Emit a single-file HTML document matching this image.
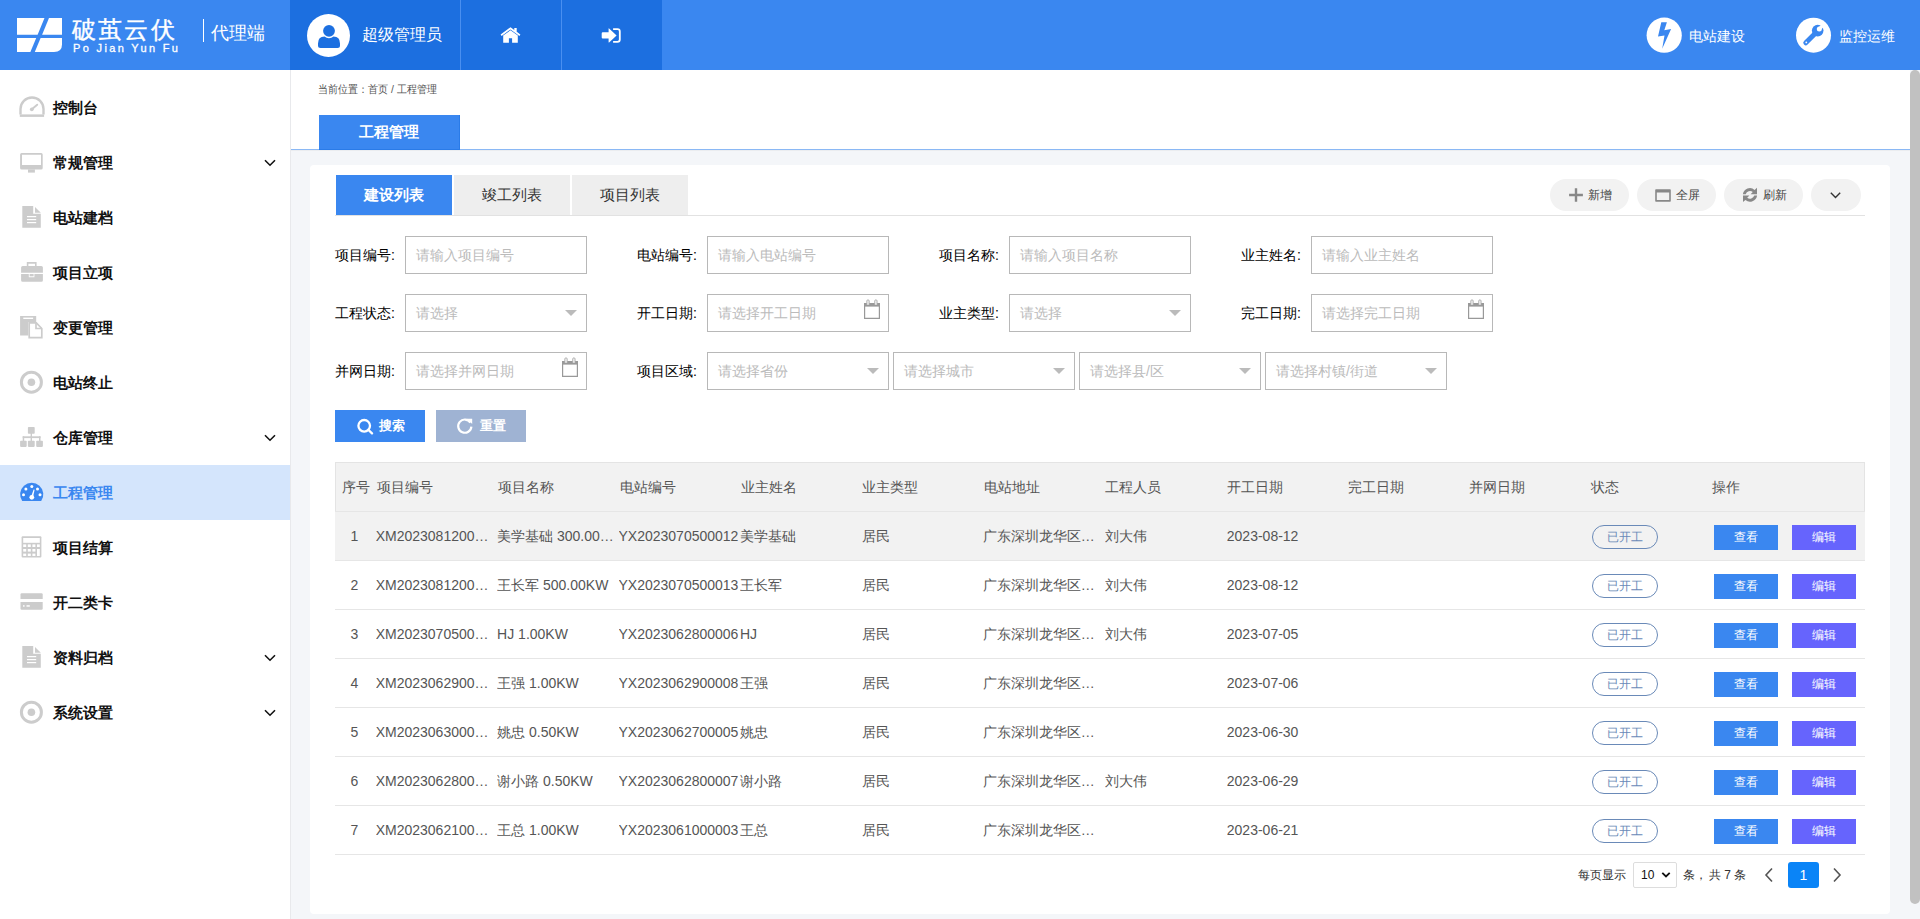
<!DOCTYPE html>
<html><head><meta charset="utf-8">
<style>
*{box-sizing:border-box;margin:0;padding:0}
html,body{width:1920px;height:919px;overflow:hidden;background:#fff;font-family:"Liberation Sans",sans-serif;color:#333}
.abs{position:absolute}
#hdr{position:absolute;left:0;top:0;width:1920px;height:70px;background:#3a87f0}
#hblk{position:absolute;left:290px;top:0;width:372px;height:70px;background:#1c6fe0}
.hdiv{position:absolute;top:0;width:1px;height:70px;background:#4a8ff0}
#side{position:absolute;left:0;top:70px;width:290px;height:849px;background:#fff}
#sline{position:absolute;left:290px;top:70px;width:1px;height:849px;background:#e8e9ec}
.mi{position:absolute;left:0;width:290px;height:55px;font-size:15px;font-weight:bold;color:#111}
.mi .t{position:absolute;left:53px;top:0;line-height:55px}
.mi.act{background:#d4e5fc;color:#3a87f0}
.mi svg{position:absolute}
.chev{position:absolute;left:263px;top:23px}
#main{position:absolute;left:290px;top:70px;width:1630px;height:849px;background:#f4f6f9}
#card{position:absolute;left:310px;top:165px;width:1580px;height:749px;background:#fff;border-radius:4px}
#scroll{position:absolute;left:1910px;top:70px;width:10px;height:834px;background:#c1c1c1;border-radius:5px}
.bc{font-size:10.4px;line-height:14px;color:#555;white-space:nowrap}
.tab{width:116px;height:41px;background:#eeeeee;color:#333;font-size:15px;line-height:39px;text-align:center}
.tab.act{background:#3a87f0;color:#fff;font-weight:bold}
.pill{height:32px;background:#f2f2f2;border-radius:16px}
.ptx{font-size:12px;line-height:18px;color:#444;white-space:nowrap}
.lab{font-size:14px;line-height:38px;color:#000;white-space:nowrap}
.inp{width:182px;height:38px;border:1px solid #b8b8b8;padding-left:10px;font-size:14px;line-height:36px;color:#bbb;white-space:nowrap;background:#fff}
.btn{width:90px;height:32px}
.btn span{position:absolute;top:0;line-height:31px;color:#fff;font-size:13px;font-weight:bold}
.th{font-size:14px;line-height:49px;color:#555;white-space:nowrap}
.td{font-size:14px;line-height:49px;color:#555;white-space:nowrap;overflow:hidden;text-overflow:ellipsis}
.badge{width:66px;height:24px;border:1px solid #6a8ab8;border-radius:12px;color:#6a8ab8;font-size:12px;line-height:22px;text-align:center}
.obtn{width:64px;height:25px;color:#fff;font-size:12px;line-height:25px;text-align:center}
.pg{font-size:12px;line-height:16px;color:#333;white-space:nowrap}
</style></head><body>
<div id="hdr">
  <svg class="abs" style="left:17px;top:18px" width="45" height="34" viewBox="0 0 45 34"><g fill="#fff">
   <path d="M0 0H27.5L20.6 16.7H0Z"/><path d="M32 0H45V16.7H25.1Z"/>
   <path d="M0 20H19.2L13.4 34H0Z"/><path d="M23.6 20H45V26.5Q45 34 37 34H17.8Z"/></g></svg>
  <div class="abs" style="left:72px;top:15px;font-size:24px;line-height:30px;color:#fff;letter-spacing:2.2px;-webkit-text-stroke:0.4px #fff;white-space:nowrap">破茧云伏</div>
  <div class="abs" style="left:73px;top:42px;font-size:11px;line-height:13px;color:#fff;letter-spacing:2.35px;-webkit-text-stroke:0.3px #fff;white-space:nowrap">Po Jian Yun Fu</div>
  <div class="abs" style="left:203px;top:19px;width:1px;height:23px;background:#fff"></div>
  <div class="abs" style="left:211px;top:22px;font-size:17.5px;line-height:22px;color:#fff;white-space:nowrap">代理端</div>
  <div id="hblk"></div>
  <div class="hdiv" style="left:460px"></div>
  <div class="hdiv" style="left:561px"></div>
  <svg class="abs" style="left:307px;top:14px" width="43" height="43" viewBox="0 0 43 43">
   <circle cx="21.5" cy="21.5" r="21.5" fill="#fff"/>
   <circle cx="22" cy="16.8" r="5.9" fill="#1c6fe0"/>
   <path d="M11 29.5Q11 22.5 17.5 22.5Q19.5 24.2 22 24.2Q24.5 24.2 26.5 22.5Q33 22.5 33 29.5V31.5Q33 34 30.5 34H13.5Q11 34 11 31.5Z" fill="#1c6fe0"/>
  </svg>
  <div class="abs" style="left:362px;top:25px;font-size:16px;line-height:20px;color:#fff;white-space:nowrap">超级管理员</div>
  <svg class="abs" style="left:500px;top:27px" width="21" height="16" viewBox="0 0 21 16">
   <path d="M0.6 7.6L10.5 0.2L14.3 3V1H16.7V4.8L20.4 7.6L19.4 8.9L10.5 2.4L1.6 8.9Z" fill="#fff"/>
   <path d="M3.2 8.6L10.5 3.3L17.8 8.6V15.7H12.1V11.2H8.9V15.7H3.2Z" fill="#fff"/>
  </svg>
  <svg class="abs" style="left:601px;top:28px" width="21" height="15" viewBox="0 0 21 15">
   <path d="M1.8 4.3H7.6V0.5Q7.6 0 8.1 0.4L15.6 7.4L8.1 14.4Q7.6 14.8 7.6 14.3V10.5H1.8Q0.7 10.5 0.7 9.4V5.4Q0.7 4.3 1.8 4.3Z" fill="#fff"/>
   <path d="M12.1 0.3H16.5Q19.7 0.3 19.7 3.5V11.5Q19.7 14.7 16.5 14.7H12.1V12.9H16.5Q17.9 12.9 17.9 11.5V3.5Q17.9 2.1 16.5 2.1H12.1Z" fill="#fff"/>
  </svg>
  <svg class="abs" style="left:1646px;top:17px" width="36" height="36" viewBox="0 0 36 36">
   <circle cx="18.2" cy="18.2" r="17.6" fill="#fff"/>
   <path d="M15.3 5.2H20.9L18.3 13.3L25.1 12L16.2 31.8L18.5 18.5L12 19.5Z" fill="#3a87f0"/>
  </svg>
  <div class="abs" style="left:1689px;top:27px;font-size:14px;line-height:18px;color:#fff;white-space:nowrap">电站建设</div>
  <svg class="abs" style="left:1796px;top:17px" width="36" height="36" viewBox="0 0 36 36">
   <circle cx="17.5" cy="18.2" r="17.5" fill="#fff"/>
   <circle cx="21.7" cy="13.6" r="5.8" fill="#3a87f0"/>
   <path d="M19.6 16L9.8 25.8" stroke="#3a87f0" stroke-width="5" stroke-linecap="round"/>
   <circle cx="23.3" cy="12" r="2.5" fill="#fff"/>
   <path d="M23.3 12L27.5 7.8" stroke="#fff" stroke-width="3.2"/>
   <circle cx="10.3" cy="25.4" r="0.9" fill="#fff"/>
  </svg>
  <div class="abs" style="left:1839px;top:27px;font-size:14px;line-height:18px;color:#fff;white-space:nowrap">监控运维</div>
</div>
<div id="side">
<div class="mi" style="top:10px"><span class="t">控制台</span></div>
<div class="mi" style="top:65px"><span class="t">常规管理</span></div>
<div class="mi" style="top:120px"><span class="t">电站建档</span></div>
<div class="mi" style="top:175px"><span class="t">项目立项</span></div>
<div class="mi" style="top:230px"><span class="t">变更管理</span></div>
<div class="mi" style="top:285px"><span class="t">电站终止</span></div>
<div class="mi" style="top:340px"><span class="t">仓库管理</span></div>
<div class="mi act" style="top:395px"><span class="t">工程管理</span></div>
<div class="mi" style="top:450px"><span class="t">项目结算</span></div>
<div class="mi" style="top:505px"><span class="t">开二类卡</span></div>
<div class="mi" style="top:560px"><span class="t">资料归档</span></div>
<div class="mi" style="top:615px"><span class="t">系统设置</span></div>
<svg class="abs" style="left:14px;top:20px" width="36" height="34" viewBox="0 0 36 34"><path d="M6.5 24.6V19A11.5 11.5 0 0 1 29.5 19V24.6" fill="none" stroke="#cccccc" stroke-width="2.4"/><rect x="5.8" y="24.4" width="24.3" height="2.5" fill="#cccccc"/><path d="M17.8 19.3L23.2 14.7" stroke="#cccccc" stroke-width="1.9" stroke-linecap="round"/><circle cx="17.8" cy="19.3" r="1.9" fill="#cccccc"/></svg>
<svg class="abs" style="left:14px;top:75px" width="36" height="34" viewBox="0 0 36 34"><path d="M7.6 8H27.2Q28.7 8 28.7 9.5V23.1Q28.7 24.6 27.2 24.6H7.6Q6.1 24.6 6.1 23.1V9.5Q6.1 8 7.6 8ZM8 9.8V20H27V9.8Z" fill="#cccccc" fill-rule="evenodd"/><rect x="14" y="24.4" width="6.9" height="3.2" fill="#cccccc"/></svg>
<svg class="abs" style="left:263px;top:88px" width="14" height="10" viewBox="0 0 14 10"><path d="M2 2.2L7 7.2L12 2.2" fill="none" stroke="#111" stroke-width="1.6"/></svg>
<svg class="abs" style="left:14px;top:130px" width="36" height="34" viewBox="0 0 36 34"><path d="M8.3 6.1H19.2V13.7H26.8V27.8H8.3Z" fill="#cccccc"/><path d="M21 7L26.8 12.8H21Z" fill="#cccccc"/><rect x="13" y="16" width="9.2" height="1.2" fill="#fff"/><rect x="13" y="19" width="9.2" height="1.2" fill="#fff"/><rect x="13" y="22" width="9.2" height="1.2" fill="#fff"/></svg>
<svg class="abs" style="left:14px;top:185px" width="36" height="34" viewBox="0 0 36 34"><path d="M12.8 11V7H22.6V11H21V8.8H14.4V11Z" fill="#cccccc"/><path d="M7.1 12.4Q7.1 10.9 8.6 10.9H27.4Q28.9 10.9 28.9 12.4V17.8H7.1Z" fill="#cccccc"/><path d="M7.1 19H14.8V22.2H20.4V19H28.9V25.2Q28.9 26.7 27.4 26.7H8.6Q7.1 26.7 7.1 25.2Z" fill="#cccccc"/><rect x="15.6" y="19" width="4" height="2.3" fill="#cccccc"/></svg>
<svg class="abs" style="left:14px;top:240px" width="36" height="34" viewBox="0 0 36 34"><path d="M6.1 5.9H22.2V11.9H14.3V25.6H6.1Z" fill="#cccccc"/><rect x="9.3" y="7.6" width="9.8" height="1.4" fill="#fff"/><path d="M15.2 12.8H22.3L27.8 18.5V27.6H15.2Z" fill="none" stroke="#cccccc" stroke-width="1.7"/><path d="M22 12.3V18.5H28" fill="none" stroke="#cccccc" stroke-width="1.7"/></svg>
<svg class="abs" style="left:14px;top:295px" width="36" height="34" viewBox="0 0 36 34"><circle cx="17.4" cy="17.2" r="10" fill="none" stroke="#cccccc" stroke-width="3"/><circle cx="17.4" cy="17.2" r="3.8" fill="#cccccc"/></svg>
<svg class="abs" style="left:14px;top:350px" width="36" height="34" viewBox="0 0 36 34"><rect x="13.9" y="7" width="6.8" height="6.7" rx="0.8" fill="#cccccc"/><rect x="16.6" y="13" width="1.4" height="4" fill="#cccccc"/><rect x="8.7" y="16.3" width="17.8" height="1.8" fill="#cccccc"/><rect x="8.7" y="16.3" width="1.5" height="5" fill="#cccccc"/><rect x="25" y="16.3" width="1.5" height="5" fill="#cccccc"/><rect x="16.6" y="16.3" width="1.4" height="5" fill="#cccccc"/><rect x="6.1" y="20.7" width="6.6" height="6.2" rx="0.8" fill="#cccccc"/><rect x="13.9" y="20.7" width="6.8" height="6.2" rx="0.8" fill="#cccccc"/><rect x="22.2" y="20.7" width="6.7" height="6.2" rx="0.8" fill="#cccccc"/></svg>
<svg class="abs" style="left:263px;top:363px" width="14" height="10" viewBox="0 0 14 10"><path d="M2 2.2L7 7.2L12 2.2" fill="none" stroke="#111" stroke-width="1.6"/></svg>
<svg class="abs" style="left:14px;top:405px" width="36" height="34" viewBox="0 0 36 34"><path d="M8.2 26.1A11.6 11.6 0 1 1 27.2 26.1Z" fill="#3a87f0"/><g fill="#fff"><circle cx="17.8" cy="11.5" r="1.5"/><circle cx="11.9" cy="14" r="1.5"/><circle cx="23.5" cy="14" r="1.5"/><circle cx="9.5" cy="19.7" r="1.5"/><circle cx="26" cy="19.7" r="1.5"/><circle cx="17.8" cy="22.3" r="2.4"/><path d="M17 22L19.6 14.5L20.6 14.8L18.9 22.5Z"/></g></svg>
<svg class="abs" style="left:14px;top:460px" width="36" height="34" viewBox="0 0 36 34"><path d="M8.6 6.3H26.4Q27.4 6.3 27.4 7.3V26.6Q27.4 27.6 26.4 27.6H8.6Q7.6 27.6 7.6 26.6V7.3Q7.6 6.3 8.6 6.3Z" fill="#cccccc"/><g fill="#fff"><rect x="9.2" y="8" width="16.6" height="4.8"/><rect x="9.2" y="14.4" width="3" height="2.6"/><rect x="13.8" y="14.4" width="3" height="2.6"/><rect x="18.4" y="14.4" width="3" height="2.6"/><rect x="23" y="14.4" width="2.8" height="2.6"/><rect x="9.2" y="19" width="3" height="2.6"/><rect x="13.8" y="19" width="3" height="2.6"/><rect x="18.4" y="19" width="3" height="2.6"/><rect x="23" y="19" width="2.8" height="7"/><rect x="9.2" y="23.6" width="3" height="2.4"/><rect x="13.8" y="23.6" width="3" height="2.4"/><rect x="18.4" y="23.6" width="3" height="2.4"/></g></svg>
<svg class="abs" style="left:14px;top:515px" width="36" height="34" viewBox="0 0 36 34"><path d="M7.7 8.3H27.5Q28.7 8.3 28.7 9.5V13.9H6.5V9.5Q6.5 8.3 7.7 8.3Z" fill="#cccccc"/><path d="M6.5 16.9H28.7V23.6Q28.7 24.8 27.5 24.8H7.7Q6.5 24.8 6.5 23.6Z" fill="#cccccc"/><rect x="9" y="20.2" width="1.6" height="1.5" fill="#fff"/><rect x="12.5" y="20.2" width="3.3" height="1.5" fill="#fff"/></svg>
<svg class="abs" style="left:14px;top:570px" width="36" height="34" viewBox="0 0 36 34"><path d="M8.3 6.1H19.2V13.7H26.8V27.8H8.3Z" fill="#cccccc"/><path d="M21 7L26.8 12.8H21Z" fill="#cccccc"/><rect x="13" y="16" width="9.2" height="1.2" fill="#fff"/><rect x="13" y="19" width="9.2" height="1.2" fill="#fff"/><rect x="13" y="22" width="9.2" height="1.2" fill="#fff"/></svg>
<svg class="abs" style="left:263px;top:583px" width="14" height="10" viewBox="0 0 14 10"><path d="M2 2.2L7 7.2L12 2.2" fill="none" stroke="#111" stroke-width="1.6"/></svg>
<svg class="abs" style="left:14px;top:625px" width="36" height="34" viewBox="0 0 36 34"><circle cx="17.4" cy="17.2" r="10" fill="none" stroke="#cccccc" stroke-width="3"/><circle cx="17.4" cy="17.2" r="3.8" fill="#cccccc"/></svg>
<svg class="abs" style="left:263px;top:638px" width="14" height="10" viewBox="0 0 14 10"><path d="M2 2.2L7 7.2L12 2.2" fill="none" stroke="#111" stroke-width="1.6"/></svg>
</div>
<div id="main"></div>
<div id="sline"></div>
<div class="abs" style="left:291px;top:70px;width:1619px;height:80px;background:#fff"></div>
<div class="abs" style="left:291px;top:149px;width:1619px;height:1px;background:#8ab8f5"></div>
<div class="abs" style="left:291px;top:150px;width:1619px;height:1px;background:#ebedf0"></div>
<div class="abs bc" style="left:318px;top:83px;transform:scaleY(1.1);transform-origin:0 50%">当前位置：首页 / 工程管理</div>
<div class="abs" style="left:319px;top:115px;width:141px;height:35px;background:#3a87f0;border-right:1px solid #2a7be8;border-bottom:1px solid #2a7be8;color:#fff;font-size:15px;font-weight:bold;text-align:center;line-height:34px">工程管理</div>
<div id="card"></div>
<div id="scroll"></div>
<!-- CARD CONTENT -->
<div class="abs tab act" style="left:336px;top:175px">建设列表</div>
<div class="abs tab" style="left:454px;top:175px">竣工列表</div>
<div class="abs tab" style="left:572px;top:175px">项目列表</div>
<div class="abs" style="left:335px;top:215px;width:1530px;height:1px;background:#e2e2e2"></div>
<div class="abs pill" style="left:1550px;top:179px;width:79px"></div>
<svg class="abs" style="left:1569px;top:188px" width="14" height="14" viewBox="0 0 14 14"><path d="M5.8 0.3H8.2V5.8H13.9V8.2H8.2V13.7H5.8V8.2H0.1V5.8H5.8Z" fill="#888"/></svg>
<div class="abs ptx" style="left:1588px;top:186px">新增</div>
<div class="abs pill" style="left:1637px;top:179px;width:79px"></div>
<svg class="abs" style="left:1655px;top:189px" width="16" height="13" viewBox="0 0 16 13"><path d="M1 0.3H15Q15.8 0.3 15.8 1.1V11.9Q15.8 12.7 15 12.7H1Q0.2 12.7 0.2 11.9V1.1Q0.2 0.3 1 0.3ZM1.8 3.6V11.1H14.2V3.6Z" fill="#888" fill-rule="evenodd"/></svg>
<div class="abs ptx" style="left:1676px;top:186px">全屏</div>
<div class="abs pill" style="left:1724px;top:179px;width:79px"></div>
<svg class="abs" style="left:1742px;top:187px" width="16" height="16" viewBox="0 0 16 16"><path d="M0.9 7.2A7.1 7.1 0 0 1 12.6 2.9L15 0.7V7.2H8.6L10.8 5.1A4.5 4.5 0 0 0 3.7 7.2Z" fill="#888"/><path d="M15.1 8.6A7.1 7.1 0 0 1 3.4 12.9L1 15.1V8.6H7.4L5.2 10.7A4.5 4.5 0 0 0 12.3 8.6Z" fill="#888"/></svg>
<div class="abs ptx" style="left:1763px;top:186px">刷新</div>
<div class="abs pill" style="left:1811px;top:179px;width:50px"></div>
<svg class="abs" style="left:1829px;top:190px" width="13" height="10" viewBox="0 0 13 10"><path d="M1.8 2.8L6.5 7.5L11.2 2.8" fill="none" stroke="#333" stroke-width="1.4"/></svg>
<div class="abs lab" style="left:335px;top:236px">项目编号:</div>
<div class="abs inp" style="left:405px;top:236px">请输入项目编号</div>
<div class="abs lab" style="left:637px;top:236px">电站编号:</div>
<div class="abs inp" style="left:707px;top:236px">请输入电站编号</div>
<div class="abs lab" style="left:939px;top:236px">项目名称:</div>
<div class="abs inp" style="left:1009px;top:236px">请输入项目名称</div>
<div class="abs lab" style="left:1241px;top:236px">业主姓名:</div>
<div class="abs inp" style="left:1311px;top:236px">请输入业主姓名</div>
<div class="abs lab" style="left:335px;top:294px">工程状态:</div>
<div class="abs inp" style="left:405px;top:294px">请选择</div>
<svg class="abs" style="left:565px;top:310px" width="12" height="6" viewBox="0 0 12 6"><path d="M0 0H12L6 6Z" fill="#bbb"/></svg>
<div class="abs lab" style="left:637px;top:294px">开工日期:</div>
<div class="abs inp" style="left:707px;top:294px">请选择开工日期</div>
<svg class="abs" style="left:864px;top:299px" width="17" height="21" viewBox="0 0 17 21"><path d="M0.6 4.6H15.4V19.4H0.6Z" fill="none" stroke="#999" stroke-width="1.2"/><rect x="0.6" y="4" width="14.8" height="3.6" fill="#999"/><path d="M2.9 5.8V1.8Q2.9 0.9 4 0.9Q5.1 0.9 5.1 1.8V5.8" fill="#fff" stroke="#aaa" stroke-width="1"/><path d="M10.8 5.8V1.8Q10.8 0.9 11.9 0.9Q13 0.9 13 1.8V5.8" fill="#fff" stroke="#aaa" stroke-width="1"/></svg>
<div class="abs lab" style="left:939px;top:294px">业主类型:</div>
<div class="abs inp" style="left:1009px;top:294px">请选择</div>
<svg class="abs" style="left:1169px;top:310px" width="12" height="6" viewBox="0 0 12 6"><path d="M0 0H12L6 6Z" fill="#bbb"/></svg>
<div class="abs lab" style="left:1241px;top:294px">完工日期:</div>
<div class="abs inp" style="left:1311px;top:294px">请选择完工日期</div>
<svg class="abs" style="left:1468px;top:299px" width="17" height="21" viewBox="0 0 17 21"><path d="M0.6 4.6H15.4V19.4H0.6Z" fill="none" stroke="#999" stroke-width="1.2"/><rect x="0.6" y="4" width="14.8" height="3.6" fill="#999"/><path d="M2.9 5.8V1.8Q2.9 0.9 4 0.9Q5.1 0.9 5.1 1.8V5.8" fill="#fff" stroke="#aaa" stroke-width="1"/><path d="M10.8 5.8V1.8Q10.8 0.9 11.9 0.9Q13 0.9 13 1.8V5.8" fill="#fff" stroke="#aaa" stroke-width="1"/></svg>
<div class="abs lab" style="left:335px;top:352px">并网日期:</div>
<div class="abs inp" style="left:405px;top:352px">请选择并网日期</div>
<svg class="abs" style="left:562px;top:357px" width="17" height="21" viewBox="0 0 17 21"><path d="M0.6 4.6H15.4V19.4H0.6Z" fill="none" stroke="#999" stroke-width="1.2"/><rect x="0.6" y="4" width="14.8" height="3.6" fill="#999"/><path d="M2.9 5.8V1.8Q2.9 0.9 4 0.9Q5.1 0.9 5.1 1.8V5.8" fill="#fff" stroke="#aaa" stroke-width="1"/><path d="M10.8 5.8V1.8Q10.8 0.9 11.9 0.9Q13 0.9 13 1.8V5.8" fill="#fff" stroke="#aaa" stroke-width="1"/></svg>
<div class="abs lab" style="left:637px;top:352px">项目区域:</div>
<div class="abs inp" style="left:707px;top:352px">请选择省份</div>
<svg class="abs" style="left:867px;top:368px" width="12" height="6" viewBox="0 0 12 6"><path d="M0 0H12L6 6Z" fill="#bbb"/></svg>
<div class="abs inp" style="left:893px;top:352px">请选择城市</div>
<svg class="abs" style="left:1053px;top:368px" width="12" height="6" viewBox="0 0 12 6"><path d="M0 0H12L6 6Z" fill="#bbb"/></svg>
<div class="abs inp" style="left:1079px;top:352px">请选择县/区</div>
<svg class="abs" style="left:1239px;top:368px" width="12" height="6" viewBox="0 0 12 6"><path d="M0 0H12L6 6Z" fill="#bbb"/></svg>
<div class="abs inp" style="left:1265px;top:352px">请选择村镇/街道</div>
<svg class="abs" style="left:1425px;top:368px" width="12" height="6" viewBox="0 0 12 6"><path d="M0 0H12L6 6Z" fill="#bbb"/></svg>
<div class="abs btn" style="left:335px;top:410px;background:#3a87f0"><span style="left:44px">搜索</span></div>
<svg class="abs" style="left:356px;top:417px" width="18" height="18" viewBox="0 0 18 18"><circle cx="8.2" cy="8.8" r="5.8" fill="none" stroke="#fff" stroke-width="2.3"/><path d="M12.3 12.8L16 16.4" stroke="#fff" stroke-width="2.3" stroke-linecap="round"/></svg>
<div class="abs btn" style="left:436px;top:410px;background:#9fb3d3"><span style="left:44px">重置</span></div>
<svg class="abs" style="left:456px;top:417px" width="18" height="18" viewBox="0 0 18 18"><path d="M14.4 5.6A6.6 6.6 0 1 0 15.4 9.6" fill="none" stroke="#fff" stroke-width="2.2"/><path d="M11 1.8H16.2V7Z" fill="#fff"/></svg>
<div class="abs" style="left:335px;top:462px;width:1530px;height:49px;background:#f2f2f2;border:1px solid #e4e4e4;border-bottom:0"></div>
<div class="abs" style="left:335px;top:512px;width:1530px;height:48px;background:#f2f2f2"></div>
<div class="abs" style="left:335px;top:511px;width:1530px;height:1px;background:#e6e6e6"></div>
<div class="abs" style="left:335px;top:560px;width:1530px;height:1px;background:#e6e6e6"></div>
<div class="abs" style="left:335px;top:609px;width:1530px;height:1px;background:#e6e6e6"></div>
<div class="abs" style="left:335px;top:658px;width:1530px;height:1px;background:#e6e6e6"></div>
<div class="abs" style="left:335px;top:707px;width:1530px;height:1px;background:#e6e6e6"></div>
<div class="abs" style="left:335px;top:756px;width:1530px;height:1px;background:#e6e6e6"></div>
<div class="abs" style="left:335px;top:805px;width:1530px;height:1px;background:#e6e6e6"></div>
<div class="abs" style="left:335px;top:854px;width:1530px;height:1px;background:#e6e6e6"></div>
<div class="abs th" style="left:342.0px;top:463px">序号</div>
<div class="abs th" style="left:376.7px;top:463px">项目编号</div>
<div class="abs th" style="left:498.1px;top:463px">项目名称</div>
<div class="abs th" style="left:619.5px;top:463px">电站编号</div>
<div class="abs th" style="left:740.9px;top:463px">业主姓名</div>
<div class="abs th" style="left:862.3px;top:463px">业主类型</div>
<div class="abs th" style="left:983.7px;top:463px">电站地址</div>
<div class="abs th" style="left:1105.1px;top:463px">工程人员</div>
<div class="abs th" style="left:1226.5px;top:463px">开工日期</div>
<div class="abs th" style="left:1347.9px;top:463px">完工日期</div>
<div class="abs th" style="left:1469.3px;top:463px">并网日期</div>
<div class="abs th" style="left:1590.7px;top:463px">状态</div>
<div class="abs th" style="left:1712.1px;top:463px">操作</div>
<div class="abs td" style="left:336px;top:512px;width:37px;text-align:center">1</div>
<div class="abs td" style="left:375.7px;top:512px;width:120.3px">XM2023081200001</div>
<div class="abs td" style="left:497.1px;top:512px;width:120.3px">美学基础 300.00KW</div>
<div class="abs td" style="left:618.5px;top:512px;width:120.3px">YX2023070500012</div>
<div class="abs td" style="left:739.9px;top:512px;width:120.3px">美学基础</div>
<div class="abs td" style="left:862.1px;top:512px;width:120.3px">居民</div>
<div class="abs td" style="left:982.7px;top:512px;width:120.3px">广东深圳龙华区民治街道</div>
<div class="abs td" style="left:1104.6px;top:512px;width:120.3px">刘大伟</div>
<div class="abs td" style="left:1226.8px;top:512px;width:120.3px">2023-08-12</div>
<div class="abs badge" style="left:1592px;top:525px">已开工</div>
<div class="abs obtn" style="left:1714px;top:525px;background:#3a87f0">查看</div>
<div class="abs obtn" style="left:1792px;top:525px;background:#6664fd">编辑</div>
<div class="abs td" style="left:336px;top:561px;width:37px;text-align:center">2</div>
<div class="abs td" style="left:375.7px;top:561px;width:120.3px">XM2023081200002</div>
<div class="abs td" style="left:497.1px;top:561px;width:120.3px">王长军 500.00KW</div>
<div class="abs td" style="left:618.5px;top:561px;width:120.3px">YX2023070500013</div>
<div class="abs td" style="left:739.9px;top:561px;width:120.3px">王长军</div>
<div class="abs td" style="left:862.1px;top:561px;width:120.3px">居民</div>
<div class="abs td" style="left:982.7px;top:561px;width:120.3px">广东深圳龙华区民治街道</div>
<div class="abs td" style="left:1104.6px;top:561px;width:120.3px">刘大伟</div>
<div class="abs td" style="left:1226.8px;top:561px;width:120.3px">2023-08-12</div>
<div class="abs badge" style="left:1592px;top:574px">已开工</div>
<div class="abs obtn" style="left:1714px;top:574px;background:#3a87f0">查看</div>
<div class="abs obtn" style="left:1792px;top:574px;background:#6664fd">编辑</div>
<div class="abs td" style="left:336px;top:610px;width:37px;text-align:center">3</div>
<div class="abs td" style="left:375.7px;top:610px;width:120.3px">XM2023070500001</div>
<div class="abs td" style="left:497.1px;top:610px;width:120.3px">HJ 1.00KW</div>
<div class="abs td" style="left:618.5px;top:610px;width:120.3px">YX2023062800006</div>
<div class="abs td" style="left:739.9px;top:610px;width:120.3px">HJ</div>
<div class="abs td" style="left:862.1px;top:610px;width:120.3px">居民</div>
<div class="abs td" style="left:982.7px;top:610px;width:120.3px">广东深圳龙华区民治街道</div>
<div class="abs td" style="left:1104.6px;top:610px;width:120.3px">刘大伟</div>
<div class="abs td" style="left:1226.8px;top:610px;width:120.3px">2023-07-05</div>
<div class="abs badge" style="left:1592px;top:623px">已开工</div>
<div class="abs obtn" style="left:1714px;top:623px;background:#3a87f0">查看</div>
<div class="abs obtn" style="left:1792px;top:623px;background:#6664fd">编辑</div>
<div class="abs td" style="left:336px;top:659px;width:37px;text-align:center">4</div>
<div class="abs td" style="left:375.7px;top:659px;width:120.3px">XM2023062900001</div>
<div class="abs td" style="left:497.1px;top:659px;width:120.3px">王强 1.00KW</div>
<div class="abs td" style="left:618.5px;top:659px;width:120.3px">YX2023062900008</div>
<div class="abs td" style="left:739.9px;top:659px;width:120.3px">王强</div>
<div class="abs td" style="left:862.1px;top:659px;width:120.3px">居民</div>
<div class="abs td" style="left:982.7px;top:659px;width:120.3px">广东深圳龙华区民治街道</div>
<div class="abs td" style="left:1226.8px;top:659px;width:120.3px">2023-07-06</div>
<div class="abs badge" style="left:1592px;top:672px">已开工</div>
<div class="abs obtn" style="left:1714px;top:672px;background:#3a87f0">查看</div>
<div class="abs obtn" style="left:1792px;top:672px;background:#6664fd">编辑</div>
<div class="abs td" style="left:336px;top:708px;width:37px;text-align:center">5</div>
<div class="abs td" style="left:375.7px;top:708px;width:120.3px">XM2023063000001</div>
<div class="abs td" style="left:497.1px;top:708px;width:120.3px">姚忠 0.50KW</div>
<div class="abs td" style="left:618.5px;top:708px;width:120.3px">YX2023062700005</div>
<div class="abs td" style="left:739.9px;top:708px;width:120.3px">姚忠</div>
<div class="abs td" style="left:862.1px;top:708px;width:120.3px">居民</div>
<div class="abs td" style="left:982.7px;top:708px;width:120.3px">广东深圳龙华区民治街道</div>
<div class="abs td" style="left:1226.8px;top:708px;width:120.3px">2023-06-30</div>
<div class="abs badge" style="left:1592px;top:721px">已开工</div>
<div class="abs obtn" style="left:1714px;top:721px;background:#3a87f0">查看</div>
<div class="abs obtn" style="left:1792px;top:721px;background:#6664fd">编辑</div>
<div class="abs td" style="left:336px;top:757px;width:37px;text-align:center">6</div>
<div class="abs td" style="left:375.7px;top:757px;width:120.3px">XM2023062800001</div>
<div class="abs td" style="left:497.1px;top:757px;width:120.3px">谢小路 0.50KW</div>
<div class="abs td" style="left:618.5px;top:757px;width:120.3px">YX2023062800007</div>
<div class="abs td" style="left:739.9px;top:757px;width:120.3px">谢小路</div>
<div class="abs td" style="left:862.1px;top:757px;width:120.3px">居民</div>
<div class="abs td" style="left:982.7px;top:757px;width:120.3px">广东深圳龙华区民治街道</div>
<div class="abs td" style="left:1104.6px;top:757px;width:120.3px">刘大伟</div>
<div class="abs td" style="left:1226.8px;top:757px;width:120.3px">2023-06-29</div>
<div class="abs badge" style="left:1592px;top:770px">已开工</div>
<div class="abs obtn" style="left:1714px;top:770px;background:#3a87f0">查看</div>
<div class="abs obtn" style="left:1792px;top:770px;background:#6664fd">编辑</div>
<div class="abs td" style="left:336px;top:806px;width:37px;text-align:center">7</div>
<div class="abs td" style="left:375.7px;top:806px;width:120.3px">XM2023062100001</div>
<div class="abs td" style="left:497.1px;top:806px;width:120.3px">王总 1.00KW</div>
<div class="abs td" style="left:618.5px;top:806px;width:120.3px">YX2023061000003</div>
<div class="abs td" style="left:739.9px;top:806px;width:120.3px">王总</div>
<div class="abs td" style="left:862.1px;top:806px;width:120.3px">居民</div>
<div class="abs td" style="left:982.7px;top:806px;width:120.3px">广东深圳龙华区民治街道</div>
<div class="abs td" style="left:1226.8px;top:806px;width:120.3px">2023-06-21</div>
<div class="abs badge" style="left:1592px;top:819px">已开工</div>
<div class="abs obtn" style="left:1714px;top:819px;background:#3a87f0">查看</div>
<div class="abs obtn" style="left:1792px;top:819px;background:#6664fd">编辑</div>
<div class="abs pg" style="left:1578px;top:867px">每页显示</div>
<div class="abs" style="left:1633px;top:862px;width:44px;height:26px;border:1px solid #ddd;border-radius:2px;background:#fff"></div>
<div class="abs pg" style="left:1641px;top:867px;color:#111">10</div>
<svg class="abs" style="left:1661px;top:871px" width="10" height="8" viewBox="0 0 10 8"><path d="M1.3 1.8L5 5.5L8.7 1.8" fill="none" stroke="#111" stroke-width="1.8"/></svg>
<div class="abs pg" style="left:1683px;top:867px">条，<span style="margin-left:2px">共 7 条</span></div>
<svg class="abs" style="left:1763px;top:867px" width="12" height="16" viewBox="0 0 12 16"><path d="M9 1.5L3 8L9 14.5" fill="none" stroke="#555" stroke-width="1.6"/></svg>
<div class="abs" style="left:1788px;top:862px;width:31px;height:26px;background:#0a84f7;border-radius:3px;color:#fff;font-size:14px;line-height:26px;text-align:center">1</div>
<svg class="abs" style="left:1831px;top:867px" width="12" height="16" viewBox="0 0 12 16"><path d="M3 1.5L9 8L3 14.5" fill="none" stroke="#555" stroke-width="1.6"/></svg>
</body></html>
